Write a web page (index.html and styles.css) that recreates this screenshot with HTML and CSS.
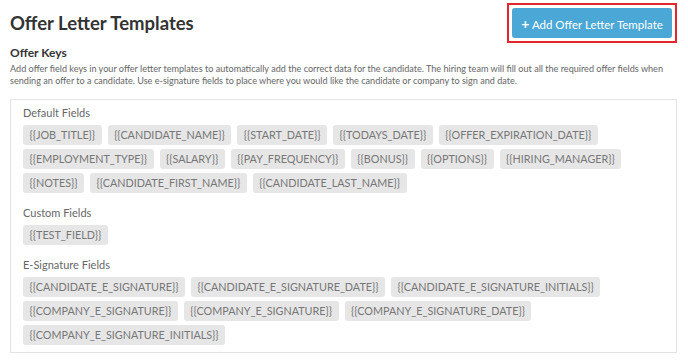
FILE: index.html
```html
<!DOCTYPE html>
<html lang="en">
<head>
  <meta charset="UTF-8" />
  <title>Offer Letter Templates</title>
  <link rel="stylesheet" href="styles.css">
</head>
<body>
  <div class="page">
    <div class="header">
      <h1>Offer Letter Templates</h1>
      <div class="highlight">
        <button class="add-btn"><span class="plus">+</span> Add Offer Letter Template</button>
      </div>
    </div>

    <h3>Offer Keys</h3>
    <p class="intro">Add offer field keys in your offer letter templates to automatically add the correct data for the candidate. The hiring team will fill out all the required offer fields when sending an offer to a candidate. Use e-signature fields to place where you would like the candidate or company to sign and date.</p>

    <div class="keys-box">
      <div class="group">
        <div class="group-title">Default Fields</div>
        <div class="chips">
          <span class="chip">{{JOB_TITLE}}</span>
          <span class="chip">{{CANDIDATE_NAME}}</span>
          <span class="chip">{{START_DATE}}</span>
          <span class="chip">{{TODAYS_DATE}}</span>
          <span class="chip">{{OFFER_EXPIRATION_DATE}}</span>
          <span class="chip">{{EMPLOYMENT_TYPE}}</span>
          <span class="chip">{{SALARY}}</span>
          <span class="chip">{{PAY_FREQUENCY}}</span>
          <span class="chip">{{BONUS}}</span>
          <span class="chip">{{OPTIONS}}</span>
          <span class="chip">{{HIRING_MANAGER}}</span>
          <span class="chip">{{NOTES}}</span>
          <span class="chip">{{CANDIDATE_FIRST_NAME}}</span>
          <span class="chip">{{CANDIDATE_LAST_NAME}}</span>
        </div>
      </div>

      <div class="group">
        <div class="group-title">Custom Fields</div>
        <div class="chips">
          <span class="chip">{{TEST_FIELD}}</span>
        </div>
      </div>

      <div class="group">
        <div class="group-title">E-Signature Fields</div>
        <div class="chips">
          <span class="chip">{{CANDIDATE_E_SIGNATURE}}</span>
          <span class="chip">{{CANDIDATE_E_SIGNATURE_DATE}}</span>
          <span class="chip">{{CANDIDATE_E_SIGNATURE_INITIALS}}</span>
          <span class="chip">{{COMPANY_E_SIGNATURE}}</span>
          <span class="chip">{{COMPANY_E_SIGNATURE}}</span>
          <span class="chip">{{COMPANY_E_SIGNATURE_DATE}}</span>
          <span class="chip">{{COMPANY_E_SIGNATURE_INITIALS}}</span>
        </div>
      </div>
    </div>
  </div>
</body>
</html>
```

FILE: styles.css
```css
* {
  box-sizing: border-box;
  font-family: 'Lato', sans-serif;
}

body {
  margin: 0;
  background: #fff;
  color: #333;
}

.page {
  padding: 3px 11px 0 10px;
}

.header {
  display: flex;
  justify-content: space-between;
  align-items: center;
  height: 40px;
}

.header h1 {
  margin: 0;
  font-size: 18.5px;
  font-weight: 700;
  color: #333;
}

.highlight {
  border: 2px solid #e3262a;
  padding: 3px;
}

.add-btn {
  display: block;
  width: 160px;
  height: 30px;
  background-color: #4ba8d6;
  color: #fff;
  border: none;
  border-radius: 3px;
  font-size: 11.5px;
  padding: 0;
  cursor: pointer;
}

.plus {
  font-weight: 700;
  font-size: 14px;
}

h3 {
  margin: 2px 0 0;
  font-size: 12px;
  font-weight: 700;
  line-height: 16px;
  color: #333;
}

.intro {
  margin: 2px 0 0;
  font-size: 9.1px;
  line-height: 12px;
  color: #666;
}

.keys-box {
  margin-top: 12px;
  border: 1px solid #e3e3e3;
  padding: 5px 12px 7px;
}

.group + .group {
  margin-top: 12px;
}

.group-title {
  font-size: 11px;
  line-height: 16px;
  color: #666;
  margin-bottom: 4px;
}

.chips {
  display: flex;
  flex-wrap: wrap;
  gap: 4px 6px;
}

.chip {
  background-color: #e6e6e6;
  color: #777;
  font-size: 10.8px;
  line-height: 20px;
  padding: 0 6.5px;
  border-radius: 3px;
}
```
